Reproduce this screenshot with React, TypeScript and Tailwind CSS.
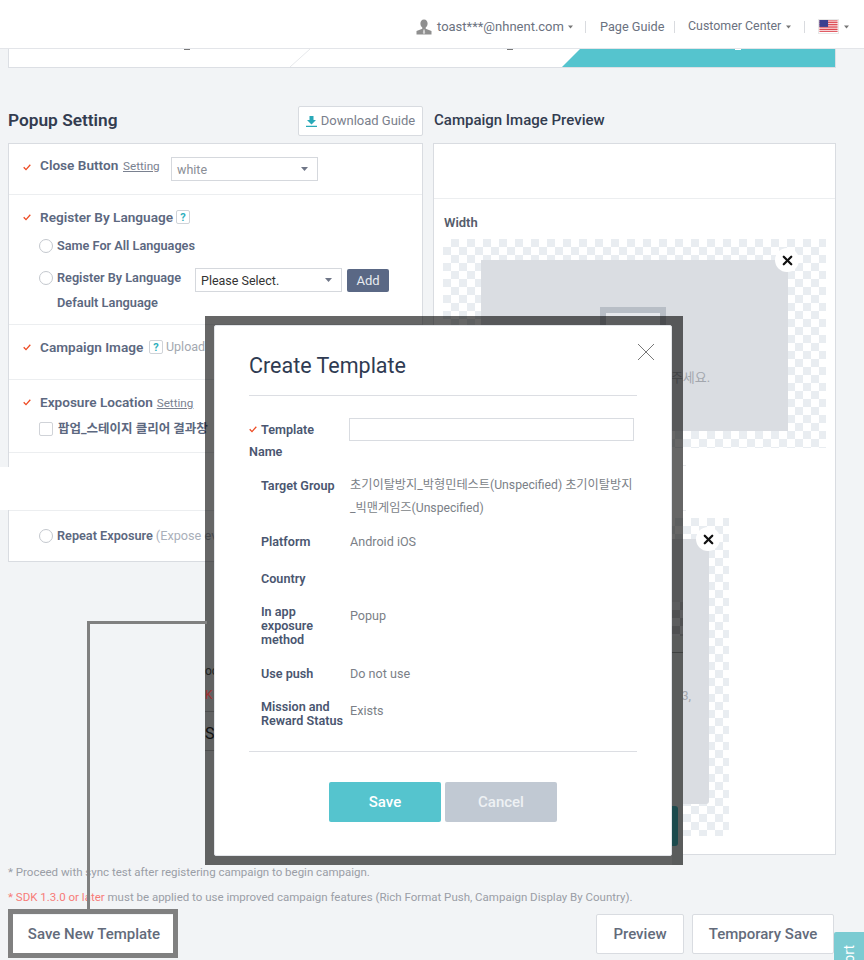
import type { ReactNode } from "react";
import { X } from "lucide-react";

function Check() {
  return (
    <svg width="8" height="7" viewBox="0 0 8 7" fill="none" className="shrink-0">
      <path d="M0.7 3.2L3 5.6L7.3 0.8" stroke="#ee4a22" strokeWidth="1.3" />
    </svg>
  );
}

function Caret({ color = "#6f7687", w = 7 }: { color?: string; w?: number }) {
  return (
    <svg width={w} height="4" viewBox="0 0 7 4" className="shrink-0">
      <path d="M0 0H7L3.5 4Z" fill={color} />
    </svg>
  );
}

function Radio() {
  return <span className="block w-[14px] h-[14px] shrink-0 rounded-full border border-[#c4c8ce] bg-white" />;
}

function Help() {
  return (
    <span className="flex items-center justify-center w-[14px] h-[14px] shrink-0 border border-[#cfd3d8] rounded-[2px] text-[11px] leading-none font-bold text-[#2fb0bd]">
      ?
    </span>
  );
}

function Setting() {
  return <span className="text-[11.7px] leading-none font-normal underline text-[#7a8190]">Setting</span>;
}

function SelectBox({ children, dark }: { children: ReactNode; dark?: boolean }) {
  return (
    <div className="flex items-center justify-between w-[147px] h-[24px] pl-[5px] pr-[9px] border border-[#d5d8dd] bg-white">
      <span className={dark ? "pt-[2px] text-[12.5px] text-[#333]" : "pt-[2px] text-[12.5px] text-[#8a8e96]"}>{children}</span>
      <Caret />
    </div>
  );
}

function CloseBadge() {
  return (
    <span className="absolute -right-[11px] -top-[12px] flex items-center justify-center w-[24px] h-[24px] rounded-full bg-white">
      <X size={15} strokeWidth={3.6} color="#111" />
    </span>
  );
}

const checker =
  "bg-[image:repeating-conic-gradient(#e9edf1_0_25%,#ffffff_0_50%)] bg-[length:16px_16px]";

function ModalRow({ label, value, className }: { label: ReactNode; value?: ReactNode; className: string }) {
  return (
    <div className={"flex pl-[12px] text-[12.6px] " + className}>
      <div className="w-[89px] shrink-0 font-semibold whitespace-nowrap text-[#4a5670]">{label}</div>
      <div className="flex-1 text-[#7b7f87]">{value}</div>
    </div>
  );
}

export default function App() {
  return (
    <div className="relative w-[864px] h-[960px] overflow-hidden bg-[#f2f4f6] font-['Roboto','Noto_Sans_CJK_KR',sans-serif]">
      {/* header */}
      <header className="h-[49px] bg-white border-b border-[#e3e5e9] flex items-center justify-end pr-[15px] pt-[5px] text-[13px] whitespace-nowrap text-[#6b7280]">
        <svg width="16" height="16" viewBox="0 0 16 16" className="mr-[5px]">
          <path d="M8 0.5c2.3 0 3.6 1.7 3.6 4 0 1.7-.8 3.3-1.9 4.1v1.1L15.5 12v3.5H.5V12l5.8-2.3V8.6C5.2 7.8 4.4 6.2 4.4 4.500c0-2.300 1.300-4 3.600-4z" fill="#8f8f8f" />
          <path d="M7.300 10.500h1.400l.5 3.500-1.200 1.200-1.200-1.200z" fill="#fff" opacity="0.6" />
        </svg>
        <span className="w-[127px]">toast***@nhnent.com</span>
        <span className="ml-[4px]"><Caret w={5} color="#777" /></span>
        <span className="w-px h-[12px] bg-[#d9dbdf] ml-[12px] mr-[14px]" />
        <span className="w-[64px] text-[12.7px]">Page Guide</span>
        <span className="w-px h-[12px] bg-[#d9dbdf] ml-[10px] mr-[13px]" />
        <span className="w-[94px] text-[12.4px]">Customer Center</span>
        <span className="ml-[4px]"><Caret w={5} color="#777" /></span>
        <span className="w-px h-[12px] bg-[#d9dbdf] ml-[13px] mr-[13px]" />
        <svg width="21" height="15" viewBox="0 0 21 15" className="border border-[#e8e8e8]">
          <rect width="21" height="15" fill="#fff" />
          {[0, 2, 4, 6, 8, 10, 12].map((y) => (
            <rect key={y} y={y + 0.5} width="21" height="1.100" fill="#d8323c" />
          ))}
          <rect width="10" height="8" fill="#3c3f8f" />
        </svg>
        <span className="ml-[5px]"><Caret w={5} color="#777" /></span>
      </header>

      <div className="relative ml-[8px] w-[828px] h-[19px] bg-white border border-t-0 border-[#dcdfe4]">
        <div className="absolute right-0 top-0 w-[273px] h-[18px] bg-[#55c4ce] [clip-path:polygon(18px_0,100%_0,100%_100%,0_100%)]" />
        <svg width="20" height="18" className="absolute left-[281px] top-0">
          <path d="M20 0L0 18" stroke="#e6e8eb" />
        </svg>
        <span className="absolute left-[175px] top-0 w-[6px] h-px bg-[#777]" />
        <span className="absolute left-[498px] top-0 w-[6px] h-px bg-[#777]" />
        <span className="absolute left-[726px] top-0 w-[6px] h-px bg-white" />
      </div>

      <div className="flex gap-[10px] mx-[8px] mt-[38px]">
        {/* left column */}
        <div className="w-[415px]">
          <div className="flex items-start justify-between h-[37px]">
            <h2 className="text-[17.3px] leading-[28px] font-semibold text-[#333c50]">Popup Setting</h2>
            <button className="flex items-center gap-[4px] w-[125px] h-[30px] justify-center bg-white border border-[#d8dbe0] rounded-[2px] text-[13px] text-[#7a808c]">
              <svg width="11" height="11" viewBox="0 0 11 11">
                <path d="M3.500 0H7.500V4H10L5.500 8.500L1 4H3.500Z M0 9.800H11V11H0Z" fill="#2aa9b8" />
              </svg>
              Download Guide
            </button>
          </div>
          <div className="bg-white border border-[#d9dce1] h-[419px] text-[13.6px] font-semibold text-[#5c6880]">
            <div className="h-[51px] border-b border-[#eceef0] flex items-start pl-[14px] pt-[12px]">
              <span className="mt-[8px]"><Check /></span>
              <span className="ml-[9px] w-[80px] leading-[18px] whitespace-nowrap">Close Button</span>
              <span className="ml-[3px] w-[36px] leading-[18px]"><Setting /></span>
              <div className="ml-[12px] mt-[1px] font-normal"><SelectBox>white</SelectBox></div>
            </div>
            <div className="h-[130px] border-b border-[#eceef0] pl-[14px] pt-[12px]">
              <div className="flex items-center h-[20px]">
                <Check />
                <span className="ml-[9px] whitespace-nowrap">Register By Language</span>
                <span className="ml-[3px]"><Help /></span>
              </div>
              <div className="flex items-center h-[20px] mt-[9px] pl-[16px] text-[12.7px]">
                <Radio />
                <span className="ml-[4px] whitespace-nowrap">Same For All Languages</span>
              </div>
              <div className="flex items-start h-[24px] mt-[12px] pl-[16px] text-[12.7px]">
                <span className="flex items-center h-[18px] w-[156px] pt-[1px]">
                  <Radio />
                  <span className="ml-[4px] whitespace-nowrap">Register By Language</span>
                </span>
                <div className="font-normal"><SelectBox dark>Please Select.</SelectBox></div>
                <button className="ml-[5px] mt-[1px] w-[42px] h-[23px] bg-[#5a6885] rounded-[2px] text-[13px] font-normal text-[#e8ebf0]">Add</button>
              </div>
              <div className="pl-[34px] pt-[1px] text-[12.8px] leading-[20px]">Default Language</div>
            </div>
            <div className="h-[55px] border-b border-[#eceef0] pl-[14px] pt-[12px]">
              <div className="flex items-center h-[20px] whitespace-nowrap">
                <Check />
                <span className="ml-[9px] w-[106px]">Campaign Image</span>
                <span className="ml-[3px]"><Help /></span>
                <span className="ml-[3px] text-[12.5px] font-normal text-[#a3a8b0]">Upload</span>
              </div>
            </div>
            <div className="h-[73px] border-b border-[#eceef0] pl-[14px] pt-[12px]">
              <div className="flex items-center h-[20px]">
                <Check />
                <span className="ml-[9px]">Exposure Location</span>
                <span className="ml-[4px]"><Setting /></span>
              </div>
              <div className="flex items-center h-[20px] mt-[7px] pl-[16px] text-[12.5px] whitespace-nowrap">
                <span className="block w-[14px] h-[14px] border border-[#d0d3d8] rounded-[2px]" />
                <span className="ml-[5px]">팝업_스테이지 클리어 결과창</span>
              </div>
            </div>
            <div className="h-[58px] border-b border-[#eceef0]" />
            <div className="h-[50px] flex items-center pl-[30px] text-[12.7px] whitespace-nowrap">
              <Radio />
              <span className="ml-[4px]">Repeat Exposure</span>
              <span className="ml-[3px] font-normal text-[#aab0ba]">(Expose every time)</span>
            </div>
          </div>
        </div>

        {/* right column */}
        <div className="w-[403px]">
          <h2 className="h-[37px] pl-[1px] text-[15px] leading-[28px] font-medium text-[#333c50]">Campaign Image Preview</h2>
          <div className="bg-white border border-[#d9dce1] h-[712px]">
            <div className="h-[55px] border-b border-[#eceef0]" />
            <div className="pl-[10px] pt-[15px] text-[13px] font-semibold leading-[18px] text-[#555c6b]">Width</div>
            <div className={"relative mt-[7px] ml-[9px] w-[383px] h-[209px] pt-[21px] pl-[38px] " + checker}>
              <div className="relative w-[307px] h-[171px] bg-[#dadde2] flex flex-col items-center pt-[47px]">
                <CloseBadge />
                <span className="block w-[66px] h-[50px] -ml-[3px] border-[6px] border-[#b8bec6] bg-[#e6e8ec]" />
                <span className="mt-[11px] ml-[10px] text-[13px] text-[#a2a6ad] whitespace-nowrap">이미지를 업로드 해주세요.</span>
              </div>
            </div>
            <div className={"mt-[70px] ml-[9px] w-[286px] h-[318px] pt-[21px] pl-[38px] " + checker}>
              <div className="relative w-[228px] h-[265px] bg-[#dadde2] rounded-[3px] pt-[148px] pr-[18px] text-right text-[12.5px] text-[#a2a6ad] whitespace-nowrap">
                <CloseBadge />
                File format: jpg, png, mp3,
              </div>
            </div>
          </div>
        </div>
      </div>

      {/* notes */}
      <div className="mx-[8px] mt-[5px] text-[11.5px] leading-[25px] text-[#9a9ea6]">
        <p>* Proceed with sync test after registering campaign to begin campaign.</p>
        <p>
          <span className="text-[#f77b78]">* SDK 1.3.0 or later</span> must be applied to use improved campaign features (Rich Format Push, Campaign Display By Country).
        </p>
      </div>

      {/* bottom buttons */}
      <div className="flex items-start mx-[13px] mt-[4px] text-[15px] font-medium text-[#636b7b]">
        <button className="mt-[1px] w-[160px] h-[39px] pl-[2px] bg-white">Save New Template</button>
        <button className="ml-[423px] w-[88px] h-[40px] bg-white border border-[#d9dce1] rounded-[2px]">Preview</button>
        <button className="ml-[8px] w-[142px] h-[40px] bg-white border border-[#d9dce1] rounded-[2px]">Temporary Save</button>
      </div>

      {/* support tab */}
      <div className="absolute left-[834px] top-[932px] w-[30px] h-[60px] bg-[#7bcbd2] rounded-tl-[2px] flex items-start justify-center overflow-hidden">
        <span className="mt-[13px] text-[14px] text-white [writing-mode:vertical-rl] rotate-180">Support</span>
      </div>

      {/* white strip floating over the page */}
      <div className="absolute left-0 top-[467px] w-[205px] h-[43px] bg-white" />
      <div className="absolute left-[683px] top-[465px] w-[3px] h-px bg-[#e9ebee]" />
      <div className="absolute left-[683px] top-[510px] w-[3px] h-px bg-[#e9ebee]" />

      {/* dimmed frame + modal */}
      <div className="absolute left-[205px] top-[316px] w-[478px] h-[549px] bg-black/60">
        <div className="absolute left-0 top-[346px] w-[9px] overflow-hidden text-right text-[12px] text-[#222] whitespace-nowrap">oo</div>
        <div className="absolute left-0 top-[370px] w-[9px] overflow-hidden text-[12px] text-[#a03030]">K</div>
        <div className="absolute left-0 top-[395px] w-[9px] h-px bg-black/20" />
        <div className="absolute left-0 top-[406px] w-[9px] overflow-hidden text-[16px] text-[#111]">Sa</div>
        <div className="absolute left-0 top-[434px] w-[9px] h-px bg-black/20" />
        <div className="absolute left-[467px] top-[286px] w-[11px] h-[34px] bg-[image:repeating-conic-gradient(#4f5052_0_25%,#5c5d5f_0_50%)] bg-[length:16px_16px]" />
        <div className="absolute left-[467px] top-[320px] w-[11px] h-[229px] bg-[#5a5c5c]" />
        <div className="absolute left-[467px] top-[336px] w-[11px] h-px bg-black/30" />
        <div className="absolute left-[467px] top-[490px] w-[6px] h-[40px] rounded-r-[3px] bg-[#1c4a4d]" />
        <div className="absolute left-[9px] top-[9px] w-[458px] h-[531px] bg-white rounded-[2px] px-[34px] border border-[#e3e5e9]">
          <svg width="18" height="18" viewBox="0 0 18 18" className="absolute right-[16px] top-[17px]">
            <path d="M1 1L17 17M17 1L1 17" stroke="#777" strokeWidth="1" />
          </svg>
          <h3 className="h-[70px] pt-[24px] border-b border-[#dcdee3] text-[21.5px] leading-[32px] text-[#2f3b52]">Create Template</h3>
          <div className="flex mt-[22px] text-[12.6px] leading-[22px]">
            <div className="w-[100px] shrink-0 font-semibold text-[#4a5670]">
              <span className="inline-flex items-center"><Check /><span className="ml-[4px]">Template</span></span>
              <br />
              Name
            </div>
            <div className="w-[285px] h-[23px] border border-[#d9dce1]" />
          </div>
          <ModalRow
            className="mt-[11px] leading-[23px]"
            label="Target Group"
            value={<span className="block text-[12.2px] whitespace-nowrap">초기이탈방지_박형민테스트(Unspecified) 초기이탈방지<br />_빅맨게임즈(Unspecified)</span>}
          />
          <ModalRow className="mt-[11px] leading-[22px]" label="Platform" value="Android iOS" />
          <ModalRow className="mt-[15px] leading-[22px]" label="Country" />
          <ModalRow
            className="mt-[15px] leading-[14px]"
            label={<>In app<br />exposure<br />method</>}
            value={<span className="block pt-[4px]">Popup</span>}
          />
          <ModalRow className="mt-[16px] leading-[22px]" label="Use push" value="Do not use" />
          <ModalRow
            className="mt-[15px] leading-[14px]"
            label={<>Mission and<br />Reward Status</>}
            value={<span className="block pt-[4px]">Exists</span>}
          />
          <div className="mt-[23px] border-t border-[#dcdee3] flex justify-center gap-[4px] pt-[30px]">
            <button className="w-[112px] h-[40px] pt-[2px] rounded-[2px] bg-[#55c4ce] text-[15px] font-medium text-white">Save</button>
            <button className="w-[112px] h-[40px] pt-[2px] rounded-[2px] bg-[#c1c9d3] text-[15px] font-medium text-[#eef1f4]">Cancel</button>
          </div>
        </div>
      </div>

      {/* annotation lines and box */}
      <div className="absolute left-[87px] top-[621px] w-[120px] h-[3px] bg-[#808080]" />
      <div className="absolute left-[87px] top-[621px] w-[3px] h-[290px] bg-[#808080]" />
      <div className="absolute left-[8px] top-[909px] w-[170px] h-[49px] border-[5px] border-[#808080]" />
    </div>
  );
}
